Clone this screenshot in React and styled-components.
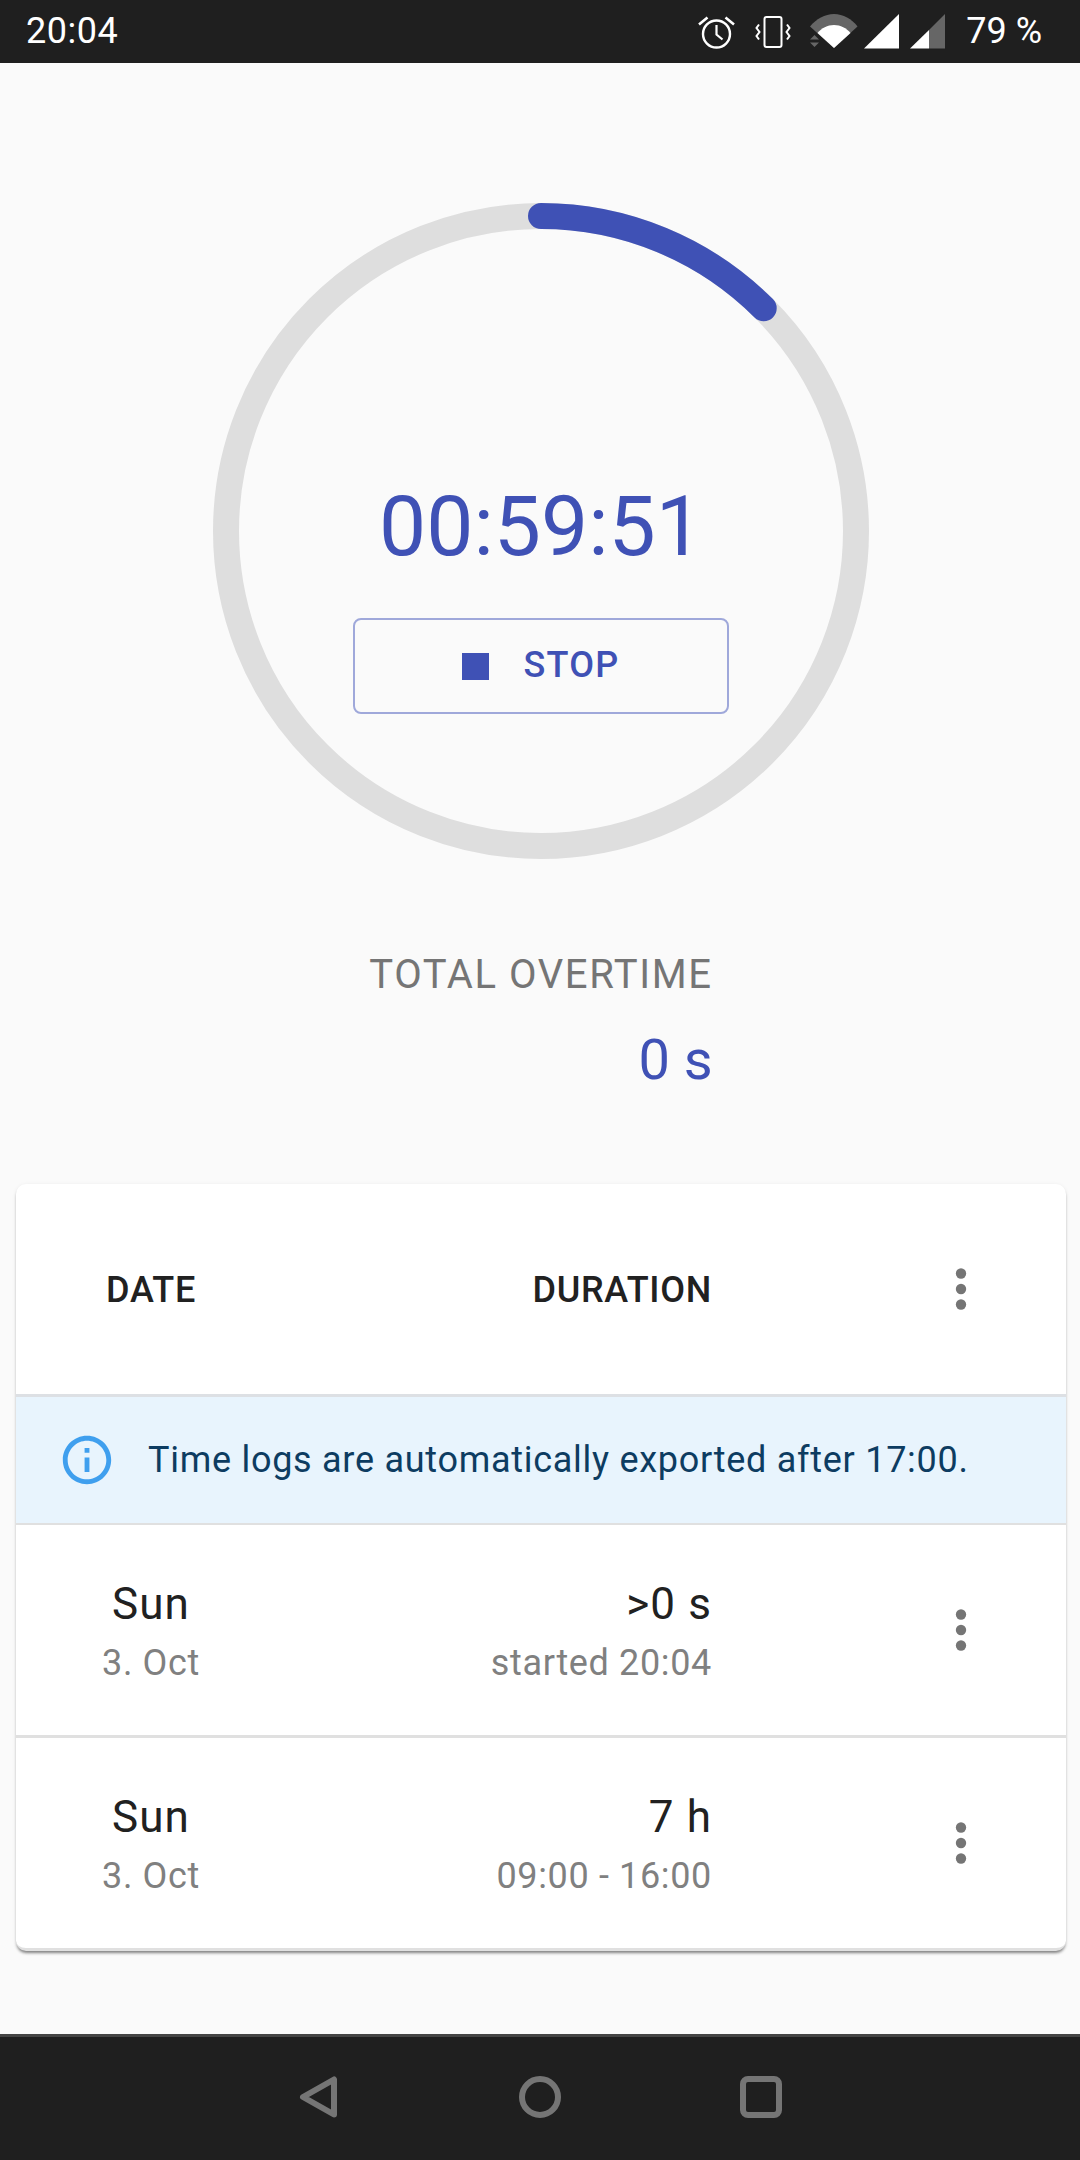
import React from "react";
import styled, { createGlobalStyle } from "styled-components";

const INDIGO = "#3f51b5";

const logs = [
  { day: "Sun", date: "3. Oct", total: ">0 s", range: "started 20:04" },
  { day: "Sun", date: "3. Oct", total: "7 h", range: "09:00 - 16:00" },
];

const MoreIcon = () => (
  <MoreSvg viewBox="0 0 24 24">
    <circle cx="12" cy="6" r="2" />
    <circle cx="12" cy="12" r="2" />
    <circle cx="12" cy="18" r="2" />
  </MoreSvg>
);

const App = () => {
  return (
    <Screen>
      <GlobalStyle />
      <StatusBar>
        <Clock>20:04</Clock>
        <StatusIcons>
          <StatusIcon width="37" height="36" viewBox="0 0 37 36" fill="none" stroke="#fff" strokeWidth="2.4">
            <circle cx="18.5" cy="20" r="13.5" />
            <path d="M18.5 11v9.5l6 5" strokeWidth="2.2" />
            <path d="M1 10.5 9.5 3.5M36 10.5 27.5 3.5" strokeWidth="2.6" />
          </StatusIcon>
          <StatusIcon $left={20} width="36" height="32" viewBox="0 0 36 32" fill="none" stroke="#fff" strokeWidth="2">
            <rect x="9.5" y="1" width="17" height="30" rx="2" />
            <path d="M4 8.5 1.5 12 4.5 16 1.5 20 4 23.5M32 8.5 34.5 12 31.5 16 34.5 20 32 23.5" />
          </StatusIcon>
          <StatusIcon $left={19} width="48" height="36" viewBox="0 0 48 36" fill="none">
            <path d="M0 12.5C6 5 15 0 24 0s18 5 23.5 12.5L24 34z" fill="#666" />
            <path d="M7.5 19C11.500 14 17.500 11 24 11s12.500 3 16.500 8L24 34z" fill="#fff" />
            <path d="M0 25.500 4.500 21 9 25.500zM0 28.500 4.500 33 9 28.500z" fill="#666" />
          </StatusIcon>
          <StatusIcon $left={6} width="36" height="36" viewBox="0 0 36 36">
            <path d="M35 0v34.500H0z" fill="#fff" />
          </StatusIcon>
          <StatusIcon $left={10} width="36" height="36" viewBox="0 0 36 36">
            <path d="M35 0v34.500H19V16z" fill="#666" />
            <path d="M19 16v18.500H0z" fill="#fff" />
          </StatusIcon>
          <Battery>79 %</Battery>
        </StatusIcons>
      </StatusBar>

      <Main>
        <Dial>
          <Ring viewBox="0 0 656 656" fill="none" strokeWidth="26">
            <circle cx="328" cy="328" r="315" stroke="#dedede" />
            <path d="M328 13A315 315 0 0 1 550.700 105.300" stroke={INDIGO} strokeLinecap="round" />
          </Ring>
          <DialBody>
            <Timer>00:59:51</Timer>
            <StopButton>
              <StopSquare />
              STOP
            </StopButton>
          </DialBody>
        </Dial>

        <Overtime>
          <OvertimeLabel>TOTAL OVERTIME</OvertimeLabel>
          <OvertimeValue>0 s</OvertimeValue>
        </Overtime>

        <Card>
          <HeadRow>
            <HeadDate>DATE</HeadDate>
            <HeadDuration>DURATION</HeadDuration>
            <MoreIcon />
          </HeadRow>
          <Notice>
            <svg width="58" height="58" viewBox="0 0 24 24" fill="#3f9fee">
              <path d="M11 7h2v2h-2zm0 4h2v6h-2zm1-9C6.480 2 2 6.480 2 12s4.480 10 10 10 10-4.480 10-10S17.520 2 12 2zm0 18c-4.410 0-8-3.590-8-8s3.590-8 8-8 8 3.590 8 8-3.590 8-8 8z" />
            </svg>
            <NoticeText>Time logs are automatically exported after 17:00.</NoticeText>
          </Notice>
          {logs.map((log, index) => (
            <LogRow key={index}>
              <DateCell>
                <Primary>{log.day}</Primary>
                <Secondary>{log.date}</Secondary>
              </DateCell>
              <DurationCell>
                <Primary>{log.total}</Primary>
                <Secondary>{log.range}</Secondary>
              </DurationCell>
              <MoreIcon />
            </LogRow>
          ))}
        </Card>
      </Main>

      <NavBar>
        <NavIcon viewBox="0 0 42 42">
          <path d="M36 3.500V38.500L5 21z" strokeLinejoin="round" />
        </NavIcon>
        <NavIcon viewBox="0 0 42 42">
          <circle cx="21" cy="21" r="18" />
        </NavIcon>
        <NavIcon viewBox="0 0 42 42">
          <rect x="3" y="3" width="36" height="36" rx="5" />
        </NavIcon>
      </NavBar>
    </Screen>
  );
};

const GlobalStyle = createGlobalStyle`
  html, body {
    margin: 0;
    padding: 0;
    background: #fafafa;
  }
`;

const Screen = styled.div`
  width: 1080px;
  height: 2160px;
  display: flex;
  flex-direction: column;
  font-family: Roboto, "Liberation Sans", sans-serif;
  background: #fafafa;
  overflow: hidden;
`;

const StatusBar = styled.div`
  height: 63px;
  flex: none;
  display: flex;
  align-items: center;
  justify-content: space-between;
  padding: 0 38px 0 26px;
  background: #1f1f1f;
  color: #fff;
  font-size: 36px;
`;

const Clock = styled.span`
  line-height: 63px;
  letter-spacing: 0.5px;
`;

const StatusIcons = styled.div`
  display: flex;
  align-items: center;
`;

const StatusIcon = styled.svg`
  display: block;
  flex: none;
  margin-left: ${(props) => props.$left || 0}px;
`;

const Battery = styled.span`
  margin-left: 20px;
  line-height: 63px;
`;

const Main = styled.main`
  flex: 1;
  display: flex;
  flex-direction: column;
  align-items: center;
`;

const Dial = styled.div`
  width: 656px;
  height: 656px;
  margin: 140px 0 0 2px;
  display: grid;
`;

const Ring = styled.svg`
  grid-area: 1 / 1;
  width: 656px;
  height: 656px;
`;

const DialBody = styled.div`
  grid-area: 1 / 1;
  display: flex;
  flex-direction: column;
  align-items: center;
  padding-top: 274px;
`;

const Timer = styled.div`
  font-size: 84px;
  line-height: 100px;
  color: ${INDIGO};
`;

const StopButton = styled.div`
  width: 376px;
  height: 96px;
  margin-top: 41px;
  padding-bottom: 2px;
  box-sizing: border-box;
  display: flex;
  align-items: center;
  justify-content: center;
  gap: 34px;
  border: 2px solid #9fa8da;
  border-radius: 8px;
  color: ${INDIGO};
  font-size: 36px;
  font-weight: 500;
  letter-spacing: 1.25px;
`;

const StopSquare = styled.span`
  width: 27px;
  height: 27px;
  margin-top: 2px;
  background: ${INDIGO};
`;

const Overtime = styled.div`
  margin: 92px 0 0 2px;
  text-align: right;
`;

const OvertimeLabel = styled.div`
  font-size: 40px;
  line-height: 48px;
  letter-spacing: 1.6px;
  color: #757575;
`;

const OvertimeValue = styled.div`
  margin-top: 29px;
  font-size: 56px;
  line-height: 64px;
  color: ${INDIGO};
`;

const Card = styled.section`
  width: 1050px;
  margin: 92px 14px 0 16px;
  box-sizing: border-box;
  background: #fff;
  border-radius: 10px;
  border-bottom: 3px solid #e0e0e0;
  box-shadow: 0 3px 3px -1px rgba(0, 0, 0, 0.45), 0 1px 4px rgba(0, 0, 0, 0.08);
  overflow: hidden;
`;

const columns = `
  display: grid;
  grid-template-columns: 270px 426px 1fr;
  align-items: center;
  padding-right: 74px;
`;

const HeadRow = styled.div`
  ${columns}
  height: 210px;
  border-bottom: 3px solid #dde0e4;
  font-size: 36px;
  font-weight: 500;
  letter-spacing: 0.7px;
  color: #212121;
`;

const HeadDate = styled.div`
  padding-top: 2px;
  text-align: center;
`;

const HeadDuration = styled.div`
  padding-top: 2px;
  text-align: right;
`;

const MoreSvg = styled.svg`
  display: block;
  width: 62px;
  height: 62px;
  justify-self: end;
  fill: #757575;
`;

const Notice = styled.div`
  height: 126px;
  display: flex;
  align-items: center;
  gap: 32px;
  padding-left: 42px;
  background: #e8f4fd;
  border-bottom: 2px solid #e0e0e0;
`;

const NoticeText = styled.span`
  font-size: 36px;
  letter-spacing: 0.72px;
  color: #0d3c61;
`;

const LogRow = styled.div`
  ${columns}
  height: 210px;
  & + & {
    border-top: 3px solid #e0e0e0;
  }
`;

const DateCell = styled.div`
  text-align: center;
`;

const DurationCell = styled.div`
  text-align: right;
`;

const Primary = styled.div`
  font-size: 44px;
  line-height: 60px;
  letter-spacing: 1.1px;
  color: #212121;
`;

const Secondary = styled.div`
  font-size: 36px;
  line-height: 48px;
  margin-top: 5px;
  letter-spacing: 0.65px;
  color: #808080;
`;

const NavBar = styled.nav`
  height: 126px;
  flex: none;
  box-sizing: border-box;
  display: flex;
  align-items: center;
  justify-content: center;
  gap: 179px;
  padding-bottom: 4px;
  background: #1f1f1f;
  border-top: 3px solid #444;
`;

const NavIcon = styled.svg`
  width: 42px;
  height: 42px;
  fill: none;
  stroke: #757575;
  stroke-width: 6;
`;

export default App;
